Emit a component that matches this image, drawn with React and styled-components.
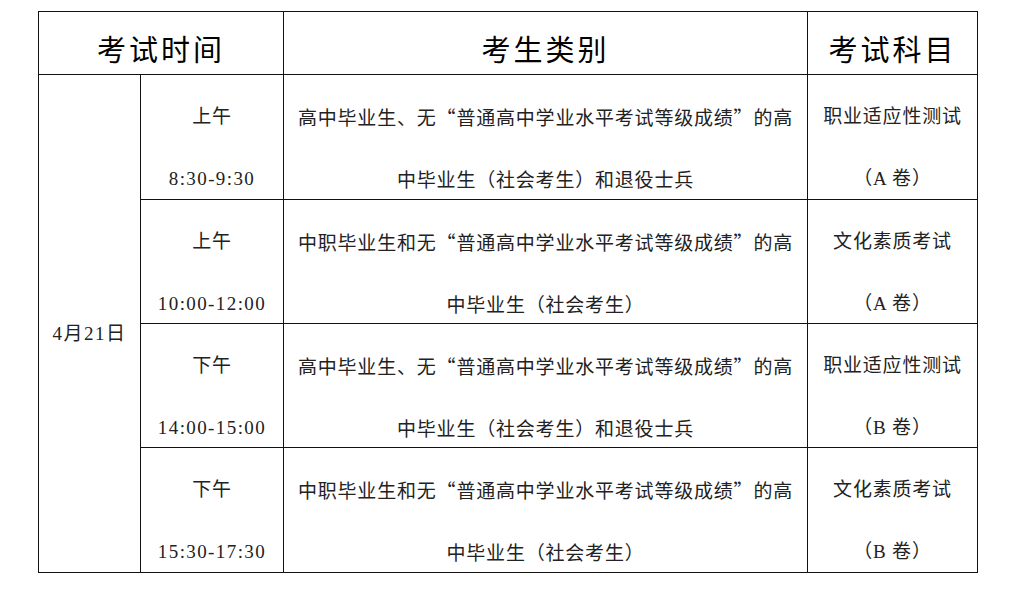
import React from "react";
import styled, { createGlobalStyle } from "styled-components";

const Global = createGlobalStyle`
  html, body { margin: 0; padding: 0; background: #fff; }
  body { font-family: "Liberation Serif", "Noto Sans CJK SC", serif; }
`;

const Page = styled.div`
  padding: 11px 0 0 38px;
  width: 1015px;
  height: 592px;
  box-sizing: border-box;
`;

const Grid = styled.div`
  display: grid;
  grid-template-columns: 102px 143px 524px 170px;
  grid-template-rows: 63px 125px 124px 124px 125px;
  width: 940px;
  box-sizing: border-box;
  border-left: 1px solid #111;
  border-top: 1px solid #111;
`;

const Cell = styled.div`
  box-sizing: border-box;
  border-right: 1px solid #111;
  border-bottom: 1px solid #111;
  display: flex;
  flex-direction: column;
  align-items: center;
  min-width: 0;
`;

const HeadCell = styled(Cell)`
  grid-column: ${(p) => p.$span || "auto"};
  justify-content: center;
  padding-top: 9px;
  font-family: "Noto Sans CJK SC", serif;
  font-size: 29px;
  letter-spacing: 3px;
  color: #000;
  line-height: 34px;
`;

const DateCell = styled(Cell)`
  grid-row: 2 / 6;
  justify-content: center;
  padding-top: 20px;
  font-size: 19px;
  color: #222;
  line-height: 30px;
  letter-spacing: 1.5px;
`;

const BodyCell = styled(Cell)`
  padding-top: 27px;
  gap: 32px;
  font-size: 19px;
  line-height: 30px;
  color: #222;
  letter-spacing: 0.8px;
  white-space: nowrap;
`;

const Line = styled.span`
  display: block;
`;

const Time = styled.span`
  display: block;
  letter-spacing: 1.4px;
`;

const Quote = styled.span`
  font-family: "Noto Sans CJK SC", sans-serif;
`;

const rows = [
  {
    period: "上午",
    time: "8:30-9:30",
    who: ["高中毕业生、无", "普通高中学业水平考试等级成绩", "的高", "中毕业生（社会考生）和退役士兵"],
    subject: "职业适应性测试",
    paper: "（A 卷）",
  },
  {
    period: "上午",
    time: "10:00-12:00",
    who: ["中职毕业生和无", "普通高中学业水平考试等级成绩", "的高", "中毕业生（社会考生）"],
    subject: "文化素质考试",
    paper: "（A 卷）",
  },
  {
    period: "下午",
    time: "14:00-15:00",
    who: ["高中毕业生、无", "普通高中学业水平考试等级成绩", "的高", "中毕业生（社会考生）和退役士兵"],
    subject: "职业适应性测试",
    paper: "（B 卷）",
  },
  {
    period: "下午",
    time: "15:30-17:30",
    who: ["中职毕业生和无", "普通高中学业水平考试等级成绩", "的高", "中毕业生（社会考生）"],
    subject: "文化素质考试",
    paper: "（B 卷）",
  },
];

export default function App() {
  return (
    <>
      <Global />
      <Page>
        <Grid>
          <HeadCell $span="1 / 3">考试时间</HeadCell>
          <HeadCell>考生类别</HeadCell>
          <HeadCell>考试科目</HeadCell>
          <DateCell>4月21日</DateCell>
          {rows.map((r, i) => (
            <React.Fragment key={i}>
              <BodyCell>
                <Line>{r.period}</Line>
                <Time>{r.time}</Time>
              </BodyCell>
              <BodyCell>
                <Line>
                  {r.who[0]}
                  <Quote>“</Quote>
                  {r.who[1]}
                  <Quote>”</Quote>
                  {r.who[2]}
                </Line>
                <Line>{r.who[3]}</Line>
              </BodyCell>
              <BodyCell>
                <Line>{r.subject}</Line>
                <Line>{r.paper}</Line>
              </BodyCell>
            </React.Fragment>
          ))}
        </Grid>
      </Page>
    </>
  );
}
